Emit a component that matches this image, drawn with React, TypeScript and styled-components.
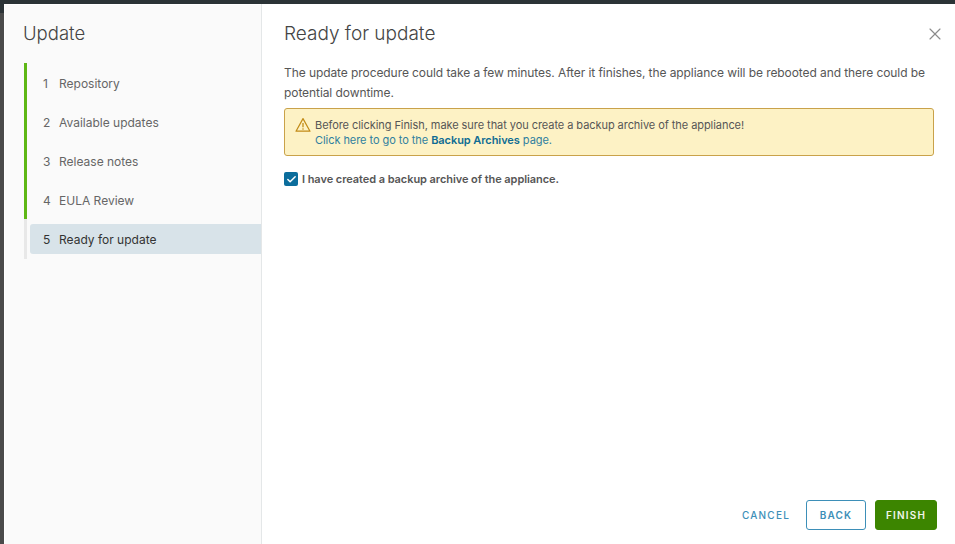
import { createGlobalStyle } from 'styled-components'
import styled from 'styled-components'
import { X, Check } from 'lucide-react'

const GlobalStyle = createGlobalStyle`
	html, body {
		margin: 0;
		height: 100%;
		overflow: hidden;
		background: #4a4a4a;
		font-family: Inter, "Noto Sans", sans-serif;
	}
`

const steps = ['Repository', 'Available updates', 'Release notes', 'EULA Review', 'Ready for update']

function App() {
	return (
		<Backdrop>
			<GlobalStyle />
			<Dialog>
				<Sidebar>
					<SideTitle>Update</SideTitle>
					<StepList>
						{steps.map((label, idx) => (
							<Step key={label} $active={idx === 4} $done={idx < 4}>
								<StepLabel $active={idx === 4}>
									<StepNumber>{idx + 1}</StepNumber>
									{label}
								</StepLabel>
							</Step>
						))}
					</StepList>
				</Sidebar>
				<Main>
					<Header>
						<Title>Ready for update</Title>
						<CloseButton>
							<X size={20} strokeWidth={1.4} />
						</CloseButton>
					</Header>
					<Intro>
						The update procedure could take a few minutes. After it finishes, the appliance will be rebooted and there could be potential downtime.
					</Intro>
					<Alert>
						<AlertIcon width="16" height="16" viewBox="0 0 16 16" fill="none">
							<path d="M8 1.6 L15 14.2 H1 Z" stroke="#c28b17" strokeWidth="1.2" strokeLinejoin="round" />
							<path d="M8 6 V10.2" stroke="#c28b17" strokeWidth="1.3" />
							<circle cx="8" cy="12" r="0.8" fill="#c28b17" />
						</AlertIcon>
						<AlertText>
							<div>Before clicking Finish, make sure that you create a backup archive of the appliance!</div>
							<AlertLink>
								Click here to go to the <strong>Backup Archives</strong> page.
							</AlertLink>
						</AlertText>
					</Alert>
					<CheckRow>
						<CheckBox>
							<Check size={11} strokeWidth={3.2} color="#fff" />
						</CheckBox>
						I have created a backup archive of the appliance.
					</CheckRow>
					<Footer>
						<GhostButton>Cancel</GhostButton>
						<OutlineButton>Back</OutlineButton>
						<PrimaryButton>Finish</PrimaryButton>
					</Footer>
				</Main>
			</Dialog>
		</Backdrop>
	)
}

const Backdrop = styled.div`
	height: 544px;
	width: 955px;
	box-sizing: border-box;
	padding: 4px 0 0 4px;
	display: flex;
	background: linear-gradient(#2b3336 13px, #4a4a4a 13px);
`

const Dialog = styled.div`
	flex: 1;
	display: flex;
	background: #fff;
`

const Sidebar = styled.div`
	width: 237px;
	flex-shrink: 0;
	background: #fafafa;
	box-shadow: inset 1px 1px 0 #fff;
	border-right: 1px solid #e4e7e8;
	padding: 17px 0 0 20px;
`

const SideTitle = styled.div`
	font-size: 18.5px;
	font-weight: 300;
	line-height: 24px;
	color: #444;
	margin: 0 0 18px -1px;
`

const StepList = styled.div`
	display: flex;
	flex-direction: column;
`

const Step = styled.div<{ $active: boolean; $done: boolean }>`
	height: ${(p) => (p.$active ? '40px' : '39px')};
	border-left: 3px solid ${(p) => (p.$done ? '#5eb715' : '#e8e8e8')};
	padding: ${(p) => (p.$active ? '5px 0 5px 3px' : '1px 0 0 3px')};
	display: flex;
	align-items: center;
	box-sizing: border-box;
`

const StepLabel = styled.div<{ $active: boolean }>`
	flex: 1;
	height: 30px;
	display: flex;
	align-items: center;
	padding-left: 13px;
	font-size: 12px;
	color: ${(p) => (p.$active ? '#333' : '#666')};
	background: ${(p) => (p.$active ? '#d8e3e9' : 'transparent')};
	border-radius: 3px 0 0 3px;
`

const StepNumber = styled.span`
	width: 16px;
`

const Main = styled.div`
	flex: 1;
	display: flex;
	flex-direction: column;
	padding: 17px 21px 0 22px;
	min-width: 0;
`

const Header = styled.div`
	display: flex;
	justify-content: space-between;
	align-items: center;
	height: 24px;
	margin-bottom: 18px;
`

const Title = styled.h1`
	margin: 0;
	font-size: 19px;
	font-weight: 300;
	color: #444;
`

const CloseButton = styled.div`
	display: flex;
	color: #8c8c8c;
	margin-top: 1px;
	margin-right: -11px;
`

const Intro = styled.p`
	margin: 0 0 5px;
	font-size: 12px;
	line-height: 20px;
	letter-spacing: -0.08px;
	color: #565656;
`

const Alert = styled.div`
	display: flex;
	gap: 4px;
	align-items: flex-start;
	height: 48px;
	box-sizing: border-box;
	padding: 9px 10px;
	background: #fdf2c5;
	border: 1px solid #c9a24a;
	border-radius: 3px;
`

const AlertIcon = styled.svg`
	margin-top: -1px;
	flex-shrink: 0;
`

const AlertText = styled.div`
	font-size: 11px;
	line-height: 15px;
	letter-spacing: -0.06px;
	color: #565656;
`

const AlertLink = styled.div`
	color: #2f7f9f;

	strong {
		color: #0f6c93;
		font-weight: 600;
	}
`

const CheckRow = styled.div`
	display: flex;
	align-items: center;
	gap: 4px;
	margin-top: 16px;
	font-size: 11px;
	font-weight: 600;
	letter-spacing: -0.06px;
	color: #565656;
`

const CheckBox = styled.span`
	width: 14px;
	height: 14px;
	border-radius: 2px;
	background: #0b6d9c;
	display: flex;
	align-items: center;
	justify-content: center;
`

const Footer = styled.div`
	margin: auto -3px 0 0;
	display: flex;
	align-items: center;
	justify-content: flex-end;
	gap: 10px;
	padding-bottom: 14px;
`

const BaseButton = styled.button`
	height: 30px;
	padding: 0;
	font-family: inherit;
	font-size: 10px;
	font-weight: 600;
	letter-spacing: 1.2px;
	text-transform: uppercase;
	border-radius: 3px;
	border: 1px solid transparent;
	background: transparent;
`

const GhostButton = styled(BaseButton)`
	width: 60px;
	color: #3d8fb8;
	font-weight: 500;
`

const OutlineButton = styled(BaseButton)`
	width: 60px;
	color: #3d8fb8;
	border-color: #3d8fb8;
	background: #fff;
`

const PrimaryButton = styled(BaseButton)`
	width: 62px;
	margin-left: -1px;
	color: #f0f5ea;
	background: #3c8500;
	border-color: #3c8500;
`

export default App
